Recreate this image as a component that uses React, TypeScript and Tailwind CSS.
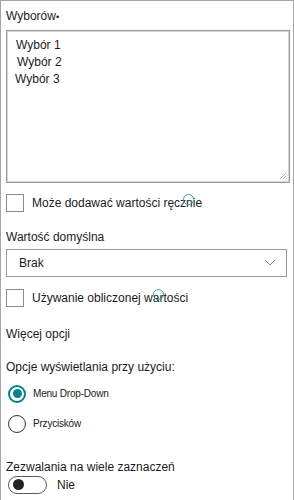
const font = { fontFamily: '"Segoe UI", "Liberation Sans", Arial, sans-serif' };

function Checkbox({ label, ringLeft }: { label: string; ringLeft: number }) {
  return (
    <div className="flex items-center h-[18px]">
      <div className="w-[18px] h-[18px] border border-[#8a8a8a] bg-white shrink-0" />
      <div className="relative ml-[8px] text-[12px] text-[#1b1b1b] leading-[14px]">
        {label}
        <span
          className="absolute top-[-2px] w-[11px] h-[11px] rounded-full border-[1.5px] border-[#3a9ea0]"
          style={{ left: ringLeft }}
        />
      </div>
    </div>
  );
}

function Radio({ label, checked }: { label: string; checked?: boolean }) {
  return (
    <div className="flex items-center h-[18px]">
      <div
        className={
          checked
            ? 'w-[18px] h-[18px] rounded-full border-2 border-[#038387] flex items-center justify-center shrink-0'
            : 'w-[18px] h-[18px] rounded-full border border-[#333] shrink-0'
        }
      >
        {checked && <div className="w-[9px] h-[9px] rounded-full bg-[#038387]" />}
      </div>
      <span className="ml-[7px] text-[10px] text-[#1b1b1b] tracking-[-0.2px]">{label}</span>
    </div>
  );
}

export default function App() {
  return (
    <div
      className="w-[294px] h-[500px] bg-white border-l border-t border-r border-[#a6a6a6] overflow-hidden flex flex-col pl-[5px] pr-[3px]"
      style={font}
    >
      <div className="mt-[8px] text-[12px] leading-[14px] text-[#1b1b1b]">
        Wyborów<span className="text-[9px] align-middle">•</span>
      </div>

      <div className="relative mt-[6px] h-[153px] border border-[#9a9a9a] shadow-[inset_0_0_0_1px_#d6d6d6] pt-[6px] pl-[8px] text-[12px] text-[#1b1b1b] leading-[17px]">
        <div className="ml-[1px]">Wybór 1</div>
        <div className="ml-[2px]">Wybór 2</div>
        <div>Wybór 3</div>
        <svg className="absolute right-[2px] bottom-[2px]" width="8" height="8" viewBox="0 0 8 8">
          <path d="M7 1 L1 7 M7 4 L4 7" stroke="#b0b0b0" strokeWidth="1" />
        </svg>
      </div>

      <div className="mt-[11px]">
        <Checkbox label="Może dodawać wartości ręcznie" ringLeft={151} />
      </div>

      <div className="mt-[18px] text-[12px] leading-[14px] text-[#1b1b1b]">Wartość domyślna</div>

      <div className="mt-[5px] mr-[3px] h-[28px] border border-[#9a9a9a] flex items-center justify-between pl-[12px] pr-[10px]">
        <span className="text-[12px] text-[#1b1b1b]">Brak</span>
        <svg width="12" height="7" viewBox="0 0 12 7">
          <path d="M1 1 L6 6 L11 1" fill="none" stroke="#8a8a8a" strokeWidth="1" />
        </svg>
      </div>

      <div className="mt-[12px]">
        <Checkbox label="Używanie obliczonej wartości" ringLeft={121} />
      </div>

      <div className="mt-[20px] text-[12px] leading-[14px] text-[#1b1b1b]">Więcej opcji</div>

      <div className="mt-[19px] text-[12px] leading-[14px] text-[#1b1b1b]">Opcje wyświetlania przy użyciu:</div>

      <div className="mt-[11px] ml-[2px]">
        <Radio label="Menu Drop-Down" checked />
      </div>
      <div className="mt-[12px] ml-[2px]">
        <Radio label="Przycisków" />
      </div>

      <div className="mt-[27px] text-[12px] leading-[14px] text-[#1b1b1b]">Zezwalania na wiele zaznaczeń</div>

      <div className="mt-[2px] ml-[2px] flex items-center">
        <div className="w-[39px] h-[18px] rounded-full border border-[#5a5a5a] flex items-center pl-[4px]">
          <div className="w-[11px] h-[11px] rounded-full bg-[#222]" />
        </div>
        <span className="ml-[10px] text-[12px] text-[#1b1b1b]">Nie</span>
      </div>
    </div>
  );
}
